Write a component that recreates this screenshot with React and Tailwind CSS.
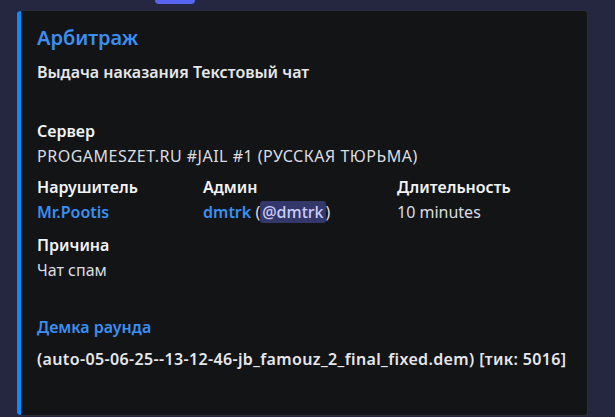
import React from 'react';

const fields = [
  { name: 'Нарушитель', value: <span className="font-semibold text-[#3b8ff0]">Mr.Pootis</span>, w: 'w-[166px]' },
  {
    name: 'Админ',
    value: (
      <span>
        <span className="font-semibold text-[#3b8ff0]">dmtrk</span> (
        <span className="rounded-[3px] bg-[#34376a] px-[2px] font-medium text-[#c9cdfb]">@dmtrk</span>)
      </span>
    ),
    w: 'w-[194px]',
  },
  { name: 'Длительность', value: '10 minutes', w: 'flex-1' },
];

function Field({ name, children, className }) {
  return (
    <div className={className}>
      <div className="font-semibold text-[#f2f3f5] leading-[22px]">{name}</div>
      <div className="mt-[3px] text-[#dbdee1] leading-[22px]">{children}</div>
    </div>
  );
}

export default function App() {
  return (
    <div className="relative h-[417px] w-[615px] overflow-hidden bg-[#25263f] text-[16px]" style={{ fontFamily: '"Noto Sans", sans-serif' }}>
      <div className="absolute left-[155px] top-0 h-[4px] w-[40px] rounded-b-[4px] bg-[#5865f2]" />
      <div className="pt-[10px] pl-[17px]">
        <div className="flex h-[406px] w-[571px] overflow-hidden rounded-[4px] border border-l-0 border-[#2e2f36] bg-[#131416]">
          <div className="w-[4px] shrink-0 bg-[#0a8cff]" />
          <div className="flex-1 pl-[16px] pr-[16px] pt-[15px]">
            <div className="text-[20px] font-semibold leading-[24px] text-[#3b8ff0]">Арбитраж</div>
            <div className="mt-[11px] font-semibold leading-[22px] text-[#e6e7ea]">Выдача наказания Текстовый чат</div>

            <Field name="Сервер" className="mt-[37px]">
              <span className="tracking-[0.5px]">PROGAMESZET.RU #JAIL #1 (РУССКАЯ ТЮРЬМА)</span>
            </Field>

            <div className="mt-[9px] flex">
              {fields.map(f => (
                <Field key={f.name} name={f.name} className={f.w}>{f.value}</Field>
              ))}
            </div>

            <Field name="Причина" className="mt-[11px]">Чат спам</Field>

            <div className="mt-[35px] font-semibold leading-[22px] text-[#3b8ff0]">Демка раунда</div>
            <div className="mt-[10px] whitespace-nowrap font-semibold leading-[22px] tracking-[0.36px] text-[#e6e7ea]">
              (auto-05-06-25--13-12-46-jb_famouz_2_final_fixed.dem) [тик: 5016]
            </div>
          </div>
        </div>
      </div>
    </div>
  );
}
